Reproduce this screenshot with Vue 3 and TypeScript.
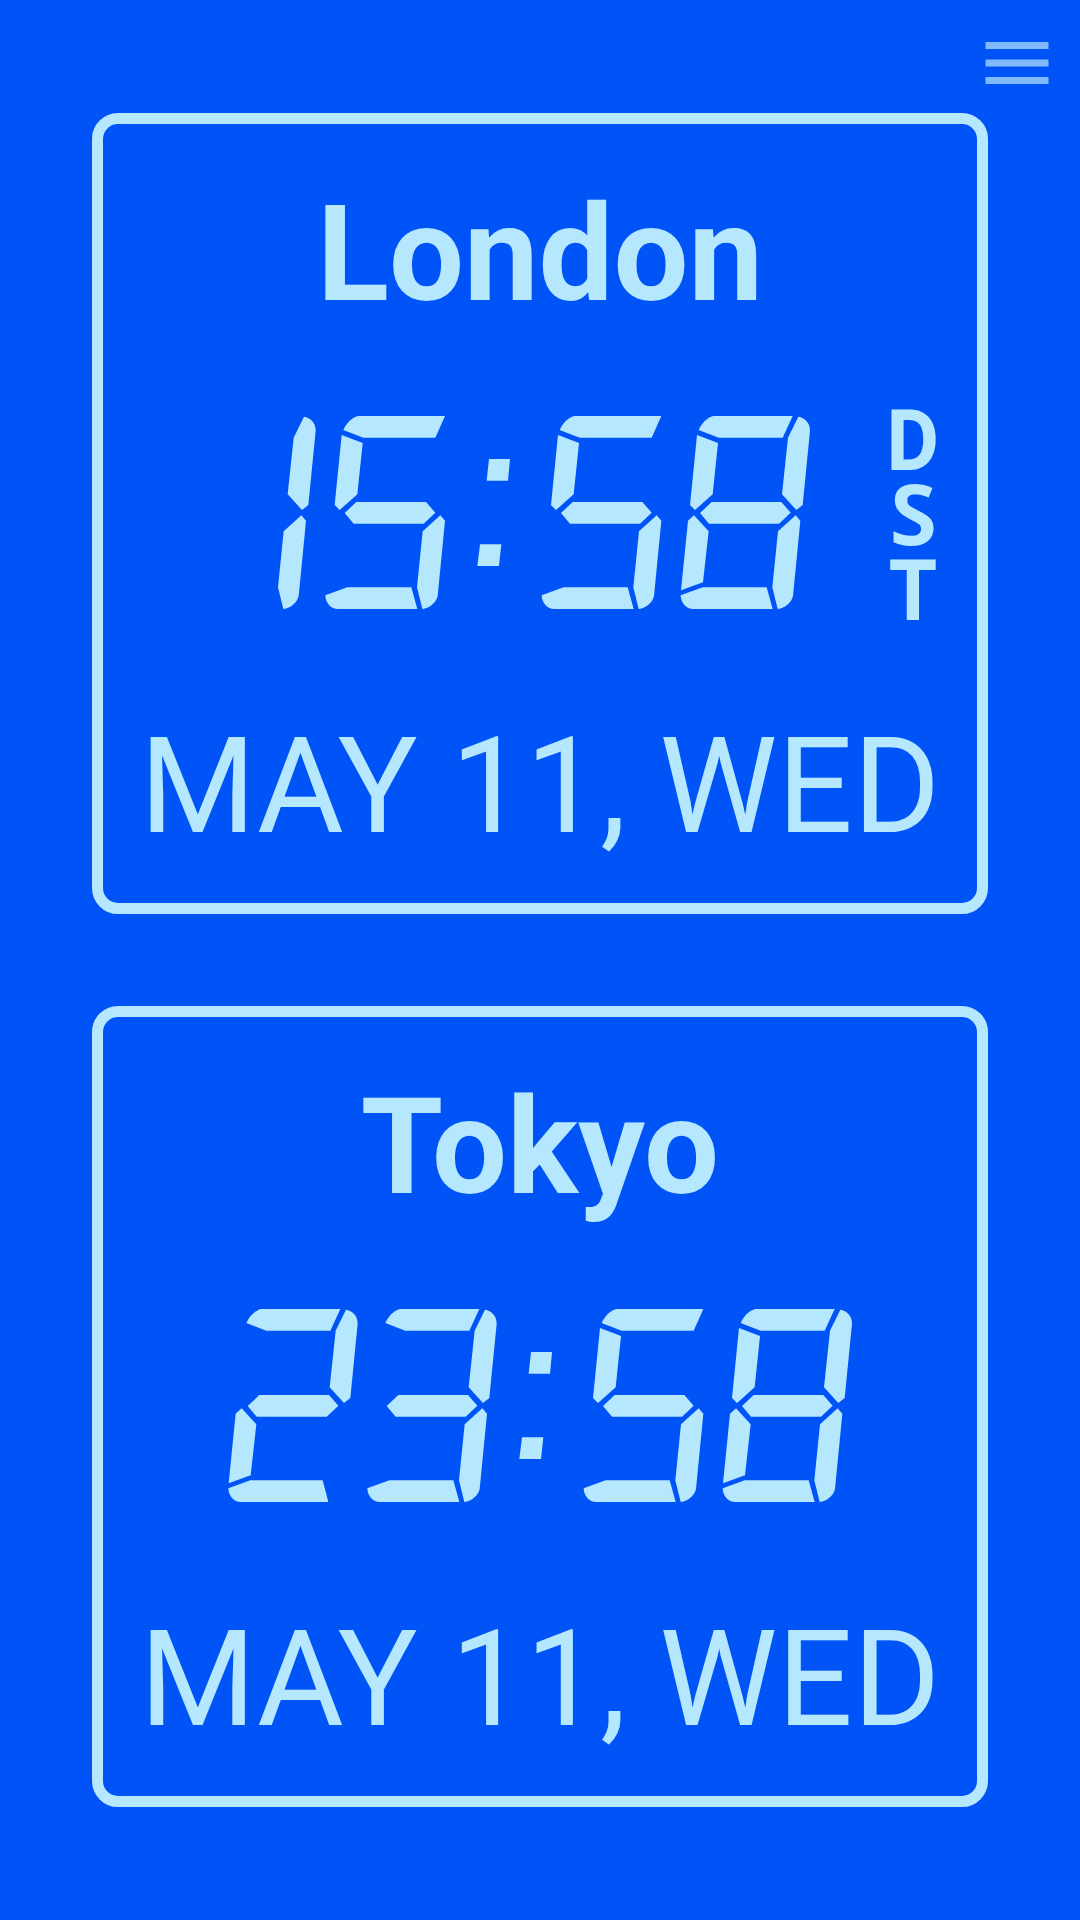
<script setup lang="ts">
interface Clock {
  city: string
  time: string
  date: string
  dst: boolean
}

interface Cell {
  x: number
  shapes: string[]
}

const clocks: Clock[] = [
  { city: 'London', time: '15:58', date: 'MAY 11, WED', dst: true },
  { city: 'Tokyo', time: '23:58', date: 'MAY 11, WED', dst: false },
]

// The seven bars of one display cell, named clockwise from the top.
// A and D are the longer top and bottom bars used when the bar beside them is off.
const segments: Record<string, string> = {
  a: 'M70 42C80 20 96 5 114 0H352L322 65H130Z',
  A: 'M70 42C80 20 96 5 114 0H375L346 65H130Z',
  b: 'M369 2C388 5 404 20 404 44L382 267L363 282L320 235L338 65Z',
  c: 'M361 298L375 314L353 540C348 560 330 576 307 579L291 514L308 346Z',
  d: 'M16 538C17 562 32 579 54 579H292L274 514H82Z',
  D: 'M16 538C17 562 32 579 54 579H316L299 514H82Z',
  e: 'M56 298L100 346L83 499L17 523L38 314Z',
  f: 'M65 57L128 81L112 235L59 282L44 267Z',
  g: 'M74 291L109 258H318L346 290L311 323H101Z',
}

const colon = ['M90 129H153L147 194H83Z', 'M63 385H127L120 450H55Z']

const lit: Record<string, string> = {
  '0': 'abcdef',
  '1': 'bc',
  '2': 'abgeD',
  '3': 'abgcd',
  '4': 'fgbc',
  '5': 'Afgcd',
  '6': 'Afgecd',
  '7': 'abc',
  '8': 'abcdefg',
  '9': 'abcdfg',
}

const DIGIT = 417
const COLON = 232

function layout(time: string): Cell[] {
  let x = 0
  return [...time].map((ch) => {
    const isColon = ch === ':'
    const cell = {
      x,
      shapes: isColon ? colon : [...lit[ch]].map((s) => segments[s]),
    }
    x += isColon ? COLON : DIGIT
    return cell
  })
}
</script>

<template>
  <main class="page">
    <button class="menu" type="button" aria-label="Menu">
      <svg class="menu-icon" viewBox="0 0 24 24" aria-hidden="true">
        <path d="M3 18h18v-2H3v2zm0-5h18v-2H3v2zm0-7v2h18V6H3z" />
      </svg>
    </button>

    <section v-for="clock in clocks" :key="clock.city" class="card">
      <h2 class="city">{{ clock.city }}</h2>
      <div class="row">
        <time class="time" :datetime="clock.time">
          <svg class="display" viewBox="0 0 1902 579" role="img" :aria-label="clock.time">
            <g
              v-for="(cell, i) in layout(clock.time)"
              :key="i"
              :transform="`translate(${cell.x} 0)`"
            >
              <path v-for="d in cell.shapes" :key="d" :d="d" />
            </g>
          </svg>
        </time>
        <div v-if="clock.dst" class="dst">
          <span v-for="letter in 'DST'" :key="letter">{{ letter }}</span>
        </div>
      </div>
      <p class="date">{{ clock.date }}</p>
    </section>
  </main>
</template>

<style>
body {
  margin: 0;
  background: #0054f7;
}
</style>

<style scoped>
.page {
  position: relative;
  box-sizing: border-box;
  min-height: 100vh;
  padding: 92px;
  display: flex;
  flex-direction: column;
  justify-content: center;
  gap: 92px;
  background: #0054f7;
  color: #b5e7ff;
  font-family: Roboto, sans-serif;
}

.menu {
  position: absolute;
  top: 21px;
  right: 21px;
  padding: 0;
  border: 0;
  background: none;
  color: #80b9fc;
  cursor: pointer;
}

.menu-icon {
  display: block;
  width: 84px;
  height: 84px;
  fill: currentColor;
}

.card {
  padding: 53px 0 39px;
  border: 11px solid #b5e7ff;
  border-radius: 26px;
}

.city,
.date {
  margin: 0;
  font-size: 133px;
  line-height: 155px;
  text-align: center;
  white-space: nowrap;
}

.city {
  font-weight: 700;
}

.date {
  font-weight: 400;
}

.row {
  display: flex;
  align-items: center;
  gap: 36px;
  min-height: 225px;
  margin: 68px 0 84px;
  padding: 0 40px;
}

.time {
  flex: 1;
  display: flex;
  justify-content: center;
}

.display {
  display: block;
  width: 634px;
  max-width: 100%;
  fill: currentColor;
}

.dst {
  display: flex;
  flex-direction: column;
  align-items: center;
  width: 48px;
  font-family: "Noto Sans Mono", "Noto Sans", sans-serif;
  font-size: 84px;
  font-weight: 700;
  line-height: 75px;
}
</style>
